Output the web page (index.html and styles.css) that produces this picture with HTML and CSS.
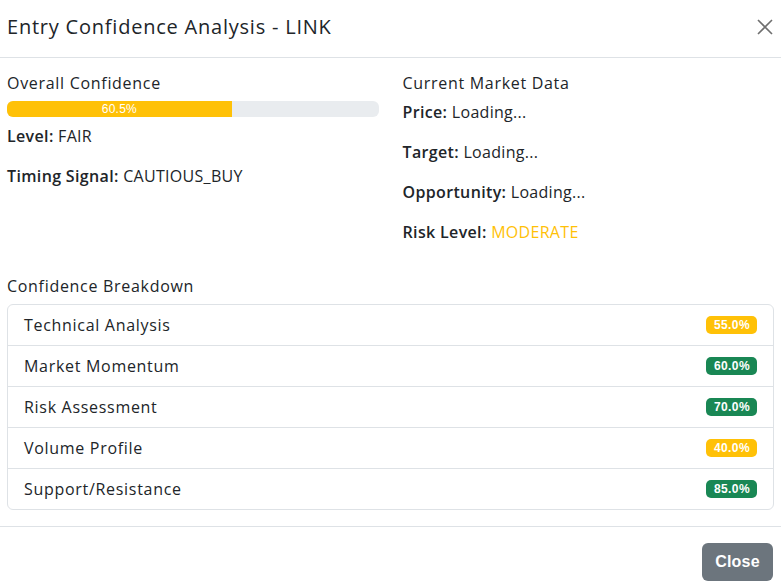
FILE: index.html
```html
<!DOCTYPE html>
<html>
<head>
<meta charset="utf-8">
<link rel="stylesheet" href="styles.css">
</head>
<body>
<div class="modal">
  <div class="modal-header">
    <h5 class="modal-title">Entry Confidence Analysis - LINK</h5>
    <button class="btn-close" aria-label="Close">
      <svg width="16" height="16" viewBox="0 0 16 16"><path d="M1 1L15 15M15 1L1 15" stroke="#6f6f6f" stroke-width="1.6" fill="none"/></svg>
    </button>
  </div>
  <div class="modal-body">
    <div class="row">
      <div class="col">
        <h6 class="sec-title">Overall Confidence</h6>
        <div class="progress"><div class="progress-bar" style="width:60.5%">60.5%</div></div>
        <p class="line first-left"><strong>Level:</strong> FAIR</p>
        <p class="line"><strong>Timing Signal:</strong> CAUTIOUS_BUY</p>
      </div>
      <div class="col">
        <h6 class="sec-title">Current Market Data</h6>
        <p class="line first-right"><strong>Price:</strong> Loading...</p>
        <p class="line"><strong>Target:</strong> Loading...</p>
        <p class="line"><strong>Opportunity:</strong> Loading...</p>
        <p class="line"><strong>Risk Level:</strong> <span class="warn">MODERATE</span></p>
      </div>
    </div>
    <h6 class="sec-title breakdown">Confidence Breakdown</h6>
    <ul class="list-group">
      <li class="item"><span>Technical Analysis</span><span class="badge yellow">55.0%</span></li>
      <li class="item"><span>Market Momentum</span><span class="badge green">60.0%</span></li>
      <li class="item"><span>Risk Assessment</span><span class="badge green">70.0%</span></li>
      <li class="item"><span>Volume Profile</span><span class="badge yellow">40.0%</span></li>
      <li class="item"><span>Support/Resistance</span><span class="badge green">85.0%</span></li>
    </ul>
  </div>
  <div class="modal-footer">
    <button class="btn-secondary">Close</button>
  </div>
</div>
</body>
</html>
```

FILE: styles.css
```css
* { box-sizing: border-box; }
html, body { margin: 0; padding: 0; background: #fff; }
body {
  font-family: "Open Sans", "DejaVu Sans", sans-serif;
  color: #212529;
  font-size: 16px;
  line-height: 24px;
  letter-spacing: 0.7px;
}
.modal { width: 781px; }
.modal-header {
  height: 58px;
  display: flex;
  align-items: center;
  justify-content: space-between;
  padding: 0 7px 3px 7px;
  border-bottom: 1px solid #dee2e6;
}
.modal-title {
  margin: 0;
  font-size: 20px;
  font-weight: 400;
  line-height: 30px;
  letter-spacing: 0.78px;
  color: #212529;
}
.btn-close {
  background: none;
  border: 0;
  padding: 0;
  width: 16px;
  height: 16px;
  margin-right: 1px;
  display: flex;
}
.modal-body { padding: 13px 7px 16px 7px; }
.row { display: flex; gap: 24px; }
.col { flex: 1 1 0; }
.sec-title {
  margin: 0;
  font-size: 16px;
  font-weight: 400;
  line-height: 24px;
}
.progress {
  margin-top: 6px;
  height: 16px;
  background: #e9ecef;
  border-radius: 6px;
  overflow: hidden;
  display: flex;
}
.progress-bar {
  background: #ffc107;
  color: #fff;
  font-family: "Liberation Sans", Arial, sans-serif;
  font-size: 12px;
  line-height: 16px;
  letter-spacing: 0.2px;
  text-align: center;
}
.line { margin: 0 0 16px 0; font-size: 16px; line-height: 24px; letter-spacing: 0.3px; }
.line strong { font-weight: 600; letter-spacing: 0.35px; }
.first-left { margin-top: 7px; }
.first-right { margin-top: 5px; }
.warn { color: #ffc107; }
.breakdown { margin-top: 14px; margin-bottom: 6px; }
.list-group {
  list-style: none;
  margin: 0;
  padding: 0;
  border: 1px solid #dee2e6;
  border-radius: 6px;
}
.item {
  display: flex;
  justify-content: space-between;
  align-items: center;
  padding: 8px 16px;
  height: 41px;
  border-bottom: 1px solid #dee2e6;
}
.item:last-child { border-bottom: 0; height: 40px; }
.badge {
  font-family: "Liberation Sans", Arial, sans-serif;
  font-weight: 700;
  font-size: 12px;
  line-height: 12px;
  letter-spacing: 0.4px;
  color: #fff;
  padding: 3px 7px 3px 8px;
  border-radius: 5px;
}
.yellow { background: #ffc107; }
.green { background: #198754; }
.modal-footer {
  border-top: 1px solid #dee2e6;
  display: flex;
  justify-content: flex-end;
  padding: 16px 8px 5px 7px;
}
.btn-secondary {
  background: #6c757d;
  color: #fff;
  border: 0;
  border-radius: 6px;
  width: 71px;
  height: 38px;
  font-family: "Liberation Sans", Arial, sans-serif;
  font-weight: 700;
  font-size: 16px;
  letter-spacing: 0.2px;
}
```
